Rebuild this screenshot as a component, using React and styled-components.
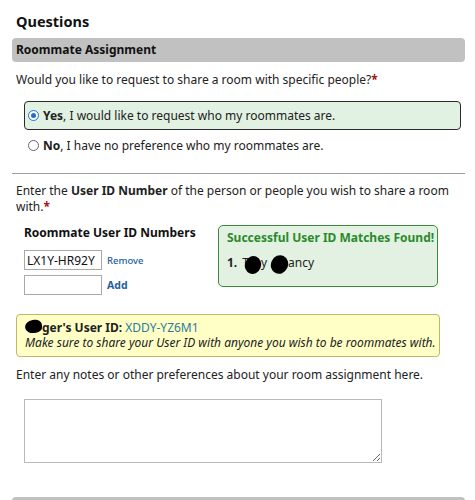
import React from "react";
import styled, { createGlobalStyle } from "styled-components";

const GlobalStyle = createGlobalStyle`
  html, body { margin: 0; padding: 0; background: #fff; }
  body {
    font-family: "Noto Sans", "Open Sans", Arial, sans-serif;
    font-size: 12px;
    color: #222;
  }
  * { box-sizing: border-box; }
`;

const Page = styled.div`
  padding: 10px 10px 0 12px;
  width: 475px;
`;

const Heading = styled.h2`
  margin: 0 0 6px 4px;
  font-size: 14.5px;
  line-height: 22px;
  font-weight: 700;
  color: #111;
`;

const SectionBar = styled.div`
  height: 24px;
  line-height: 24px;
  padding: 0 4px;
  background: #c1c1c1;
  border-radius: 4px;
  font-weight: 700;
  color: #111;
`;

const Para = styled.p`
  margin: ${(p) => p.$mt || 0}px 0 0;
  padding: 0 4px;
  line-height: 16.5px;
`;

const Req = styled.span`
  color: #a31515;
  font-weight: 700;
`;

const Options = styled.div`
  margin: 12px 4px 0 12px;
  display: flex;
  flex-direction: column;
  gap: 1px;
`;

const Option = styled.label`
  display: flex;
  align-items: center;
  gap: 4px;
  padding: 5px 3px;
  line-height: 17px;
  border: 1px solid ${(p) => (p.$selected ? "#2b2b2b" : "transparent")};
  border-radius: 4px;
  background: ${(p) => (p.$selected ? "#e1f1e2" : "transparent")};
`;

const Radio = styled.span`
  flex: none;
  width: 11px;
  height: 11px;
  border-radius: 50%;
  border: 1px solid ${(p) => (p.$checked ? "#1f6fd1" : "#666")};
  background: #fff;
  display: flex;
  align-items: center;
  justify-content: center;
  margin-top: 1px;
  &::after {
    content: "";
    width: 5px;
    height: 5px;
    border-radius: 50%;
    background: ${(p) => (p.$checked ? "#1f6fd1" : "transparent")};
  }
`;

const Divider = styled.hr`
  margin: 13px 0 0;
  border: 0;
  border-top: 1px solid #9c9c9c;
`;

const IdRow = styled.div`
  display: flex;
  margin: 9px 0 0 12px;
  align-items: flex-start;
`;

const IdColumn = styled.div`
  width: 194px;
  flex: none;
`;

const IdLabel = styled.div`
  font-weight: 700;
  line-height: 16.5px;
  white-space: nowrap;
  color: #111;
`;

const IdInputs = styled.div`
  margin-top: 9px;
  display: flex;
  flex-direction: column;
  gap: 5px;
`;

const IdEntry = styled.div`
  display: flex;
  align-items: center;
  gap: 5px;
`;

const TextInput = styled.input`
  width: 78px;
  height: 20px;
  border: 1px solid #a9a9a9;
  padding: 0 2px;
  font-family: "Noto Sans", Arial, sans-serif;
  font-size: 12px;
  color: #111;
  outline: none;
`;

const EntryLink = styled.a`
  color: #22609e;
  font-size: ${(p) => (p.$strong ? 10.5 : 9.5)}px;
  font-weight: ${(p) => (p.$strong ? 700 : 500)};
  text-decoration: none;
  cursor: pointer;
`;

const MatchBox = styled.div`
  width: 220px;
  border: 1px solid #3b8a3b;
  border-radius: 5px;
  background: #e2f1e2;
  padding: 3px 5px 12px 8px;
`;

const MatchTitle = styled.div`
  color: #2a8a2a;
  font-weight: 700;
  line-height: 17px;
  white-space: nowrap;
`;

const MatchItem = styled.div`
  margin-top: 8px;
  line-height: 17px;
  white-space: nowrap;
  b { margin-right: 5px; }
`;

const Blob = styled.span`
  display: inline-block;
  width: ${(p) => p.$w}px;
  height: ${(p) => p.$h}px;
  margin-left: ${(p) => p.$ml || 0}px;
  vertical-align: ${(p) => p.$va || 0}px;
  background: #000;
  border-radius: ${(p) => p.$r || "50%"};
  transform: rotate(${(p) => p.$rot || 0}deg);
`;

const Notice = styled.div`
  margin: 19px 0 0 4px;
  width: 424px;
  background: #ffffc6;
  border: 1px solid #c2b46c;
  border-radius: 4px;
  padding: 5px 4px 6px 8px;
  line-height: 15px;
`;

const NoticeId = styled.span`
  color: #2b7b9c;
`;

const NoticeHint = styled.div`
  font-style: italic;
  white-space: nowrap;
`;

const Notes = styled.textarea`
  display: block;
  margin: 15.5px 0 0 12px;
  width: 358px;
  height: 64px;
  border: 1px solid #b9b9b9;
  font-family: "Noto Sans", Arial, sans-serif;
  font-size: 12px;
  resize: both;
  outline: none;
`;

const BottomBar = styled(SectionBar)`
  margin-top: 34px;
`;

export default function App() {
  return (
    <>
      <GlobalStyle />
      <Page>
        <Heading>Questions</Heading>
        <SectionBar>Roommate Assignment</SectionBar>
        <Para $mt={10}>
          Would you like to request to share a room with specific people?<Req>*</Req>
        </Para>
        <Options>
          <Option $selected>
            <Radio $checked />
            <span>
              <b>Yes</b>, I would like to request who my roommates are.
            </span>
          </Option>
          <Option>
            <Radio />
            <span>
              <b>No</b>, I have no preference who my roommates are.
            </span>
          </Option>
        </Options>
        <Divider />
        <Para $mt={9}>
          Enter the <b>User ID Number</b> of the person or people you wish to share a room
          with.<Req>*</Req>
        </Para>
        <IdRow>
          <IdColumn>
            <IdLabel>Roommate User ID Numbers</IdLabel>
            <IdInputs>
              <IdEntry>
                <TextInput defaultValue="LX1Y-HR92Y" />
                <EntryLink>Remove</EntryLink>
              </IdEntry>
              <IdEntry>
                <TextInput />
                <EntryLink $strong>Add</EntryLink>
              </IdEntry>
            </IdInputs>
          </IdColumn>
          <MatchBox>
            <MatchTitle>Successful User ID Matches Found!</MatchTitle>
            <MatchItem>
              <b>1.</b>T<Blob $w={16} $h={18} $ml={-4} $va={-7} $rot={20} />y
              <Blob $w={17} $h={19} $ml={4} $va={-7} $rot={25} />ancy
            </MatchItem>
          </MatchBox>
        </IdRow>
        <Notice>
          <div>
            <Blob $w={17} $h={13} $va={-1} $r="50% 40% 40% 50%" $rot={-8} />
            <b>ger's User ID:</b> <NoticeId>XDDY-YZ6M1</NoticeId>
          </div>
          <NoticeHint>
            Make sure to share your User ID with anyone you wish to be roommates with.
          </NoticeHint>
        </Notice>
        <Para $mt={10}>Enter any notes or other preferences about your room assignment here.</Para>
        <Notes />
        <BottomBar />
      </Page>
    </>
  );
}
